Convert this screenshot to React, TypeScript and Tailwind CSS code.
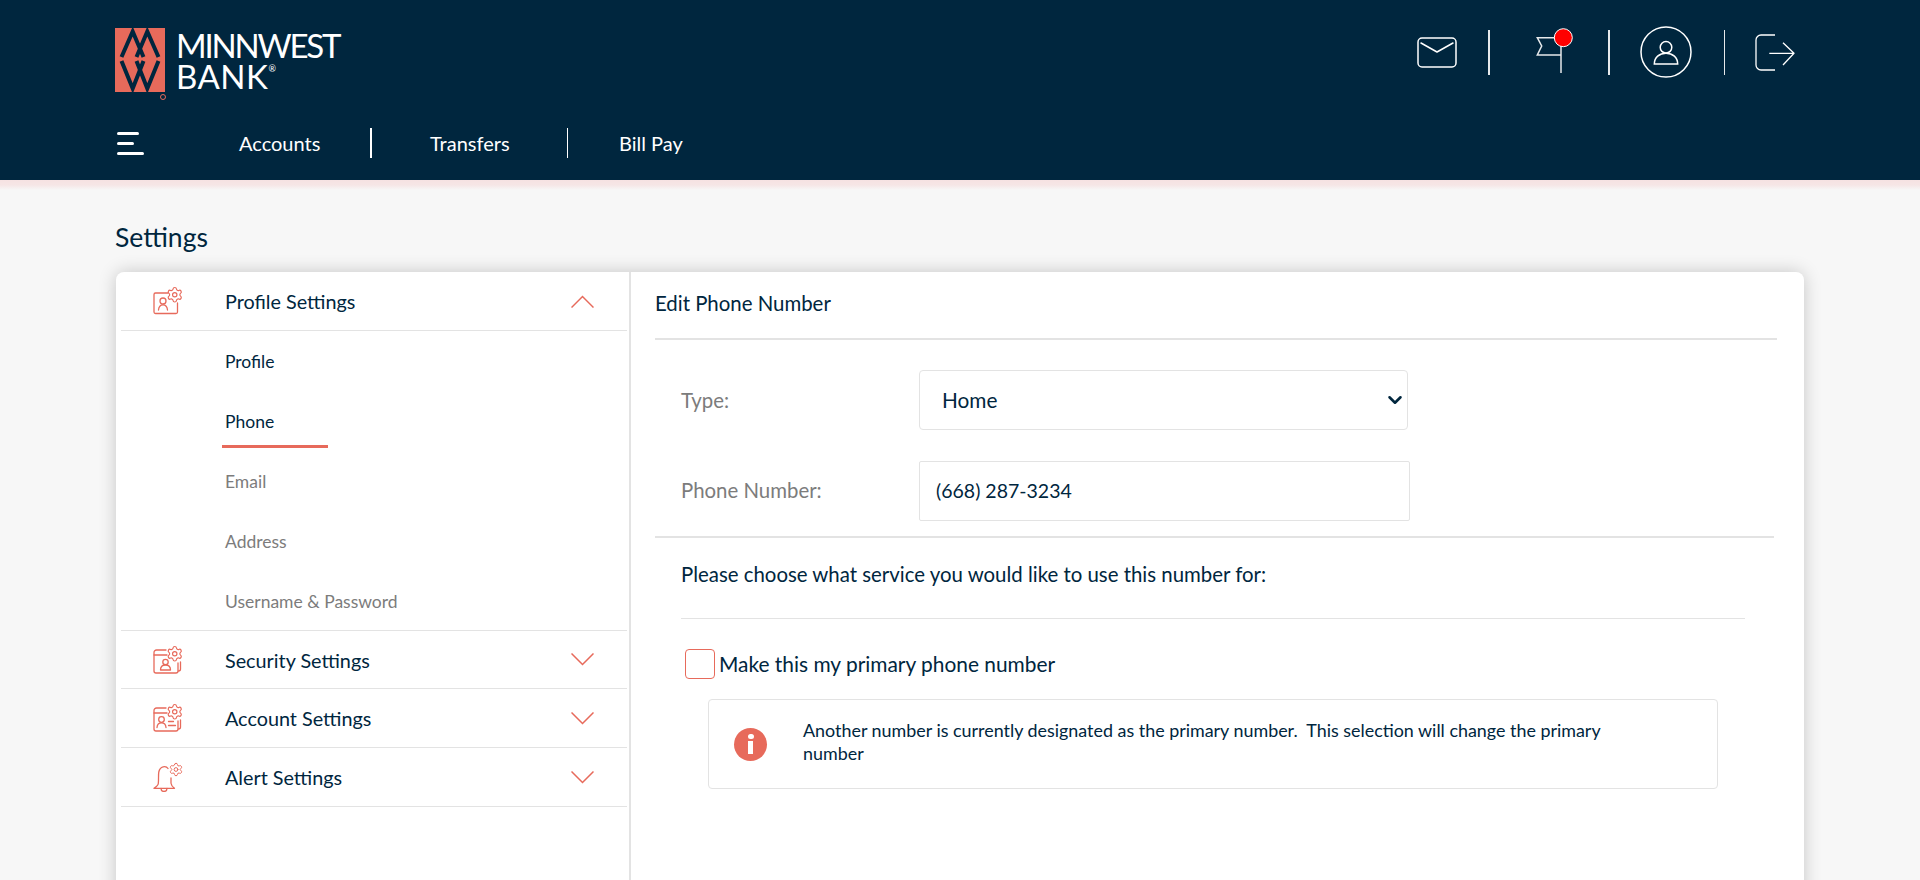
import { Settings as Gear, ChevronDown } from 'lucide-react'

const coral = '#e76a5b'

function CardIcon({ kind }: { kind: 'profile' | 'security' | 'account' | 'alert' }) {
  return (
    <svg width="30" height="30" viewBox="0 0 30 30" fill="none" stroke={coral} strokeWidth="1.300" strokeLinecap="round" strokeLinejoin="round">
      {kind === 'profile' && (
        <>
          <path d="M15 7H2.500A1.500 1.500 0 0 0 1 8.500V26a1.500 1.500 0 0 0 1.500 1.500H23a1.500 1.500 0 0 0 1.500-1.500V17" />
          <circle cx="10" cy="15" r="3" />
          <path d="M5.500 24c.3-3.500 2.200-5.200 4.500-5.200s4.200 1.700 4.500 5.200" />
        </>
      )}
      {kind === 'security' && (
        <>
          <path d="M13 5H3.500A2.500 2.500 0 0 0 1 7.500V26a2 2 0 0 0 2 2h20a2 2 0 0 0 2-2v-8" />
          <path d="M1 10h13" />
          <path d="M27.500 17v7a2 2 0 0 1-2 2" />
          <circle cx="12.500" cy="17" r="2.700" />
          <path d="M7.500 25c0-3.500 2-5 5-5s5 1.500 5 5z" />
        </>
      )}
      {kind === 'account' && (
        <>
          <path d="M13 5H3.500A2.500 2.500 0 0 0 1 7.500V26a2 2 0 0 0 2 2h20a2 2 0 0 0 2-2v-8" />
          <path d="M1 10h13" />
          <path d="M27.500 17v7a2 2 0 0 1-2 2" />
          <circle cx="8.500" cy="16.500" r="2.800" />
          <path d="M4 24.500c.2-3 2-4.600 4.500-4.600s4.300 1.600 4.500 4.600" />
          <path d="M15.500 18.500h5M15.500 22.500h7" />
        </>
      )}
      {kind === 'alert' && (
        <>
          <path d="M15 6.500C13 3.500 7 4 5.800 10c-.6 3 0 7.500-.5 11.500-.2 2-2.300 3.500-4.300 4.800h20.500c-1.800-1.300-3.300-3-3.500-5V16" />
          <path d="M8 26.500c0 2 1.500 3 3 3s3-1 3-3" />
        </>
      )}
      <Gear
        x={kind === 'alert' ? 15.500 : 13}
        y={0}
        width={kind === 'alert' ? 15 : 17.500}
        height={kind === 'alert' ? 15 : 17.500}
        color={coral}
        strokeWidth={1.600}
      />
    </svg>
  )
}

// thin coral chevron used on the accordion rows
function RowChevron({ up }: { up?: boolean }) {
  return (
    <svg width="23" height="13" viewBox="0 0 23 13" fill="none" stroke={coral} strokeWidth="1.500">
      <path d={up ? 'M0.500 12.500 11.500 1.500 22.500 12.500' : 'M0.500 0.500 11.500 11.500 22.500 0.500'} />
    </svg>
  )
}

function Logo() {
  return (
    <div className="relative w-[50px] h-[64px] bg-[#e76a5b]">
      <svg width="50" height="64" viewBox="0 0 50 64" fill="none" stroke="#00263e" strokeWidth="4">
        <path d="M6.500 29 17.700 3.500 28.500 29" />
        <path d="M43.500 29 32.300 3.500 21.500 29" />
        <path d="M6.500 33 17.700 60.500 28.500 33" />
        <path d="M43.500 33 32.300 60.500 21.500 33" />
      </svg>
      <span className="absolute -bottom-[8px] -right-[1px] w-[6px] h-[6px] rounded-full border border-[#e76a5b]" />
    </div>
  )
}

function Divider({ className }: { className: string }) {
  return <div className={`w-[2px] h-[45px] bg-[#e6e9eb] ${className}`} />
}

function Header() {
  return (
    <header className="h-[180px] bg-[#00263e] text-white flex flex-col">
      <div className="h-[128px] flex justify-between pl-[115px] pr-[125px]">
        <div className="flex items-start mt-[28px]">
          <Logo />
          <div className="ml-[11px] mt-[2px] font-['Lato',sans-serif] text-[33px] leading-[31px]">
            <div className="tracking-[-2.200px]">MINNWEST</div>
            <div className="flex tracking-[0.500px]">BANK<span className="text-[9px] leading-[16px] tracking-normal">®</span></div>
          </div>
        </div>
        <div className="flex items-center h-[52px] mt-[26px]">
          <svg className="mt-[2px]" width="40" height="32" viewBox="0 0 40 32" fill="none" stroke="white" strokeWidth="1.500" strokeLinecap="round" strokeLinejoin="round">
            <rect x="1" y="1" width="38" height="29" rx="4" />
            <path d="M4 6l16 9 16-9" />
          </svg>
          <Divider className="ml-[31px]" />
          <svg className="ml-[45px] mb-[5px]" width="40" height="47" viewBox="0 0 40 47" fill="none" stroke="#e6e9eb" strokeWidth="1.500">
            <path d="M21 11.700H2.300L6.700 20 2.300 29H26" />
            <path d="M26 20v27" />
            <circle cx="28.300" cy="11.700" r="9" fill="#ff0000" stroke="white" strokeWidth="1" />
          </svg>
          <Divider className="ml-[33px]" />
          <svg className="ml-[30px]" width="52" height="52" viewBox="0 0 52 52" fill="none" stroke="white" strokeWidth="1.500">
            <circle cx="26" cy="26" r="25" />
            <circle cx="26" cy="21.300" r="5.800" />
            <path d="M14.300 38c0-6.500 5-10.800 11.700-10.800S37.700 31.500 37.700 38z" />
          </svg>
          <div className="w-[1px] h-[45px] bg-[#e6e9eb] ml-[32px]" />
          <svg className="ml-[30px]" width="40" height="38" viewBox="0 0 40 38" fill="none" stroke="white" strokeWidth="1.300" strokeLinejoin="round">
            <path d="M20 2H6a5 5 0 0 0-5 5v25a5 5 0 0 0 5 5h14" />
            <path d="M14.300 20.300H39M28 9.700l11 10.600L28 32" />
          </svg>
        </div>
      </div>
      <nav className="h-[30px] flex items-center pl-[117px] font-['Lato',sans-serif] text-[20px]">
        <div className="w-[27px] flex flex-col gap-[7px]">
          <div className="h-[3px] w-[22px] bg-white rounded-sm" />
          <div className="h-[3px] w-[17px] bg-white rounded-sm" />
          <div className="h-[3px] w-[27px] bg-white rounded-sm" />
        </div>
        <div className="ml-[95px] w-[131px]">Accounts</div>
        <div className="w-[2px] h-[30px] bg-white" />
        <div className="ml-[58px] w-[137px]">Transfers</div>
        <div className="w-[1px] h-[30px] bg-white" />
        <div className="ml-[51px]">Bill Pay</div>
      </nav>
    </header>
  )
}

function AccordionRow({ kind, label, open, h }: { kind: 'profile' | 'security' | 'account' | 'alert'; label: string; open?: boolean; h: string }) {
  return (
    <div className={`${h} flex items-center pl-[32px] pr-[33px] border-b border-[#e3e3e3]`}>
      <CardIcon kind={kind} />
      <span className="ml-[42px] pt-[2px] flex-1 text-[19.800px] text-[#00263e]">{label}</span>
      <RowChevron up={open} />
    </div>
  )
}

function SideNav() {
  return (
    <div className="w-[515px] shrink-0 pl-[5px] pr-[2px] border-r-[2px] border-[#e3e3e3] font-['Lato',sans-serif]">
      <AccordionRow kind="profile" label="Profile Settings" open h="h-[59px]" />
      <div className="h-[60px] pt-[2px] flex items-center pl-[104px] text-[17.500px] text-[#00263e]">Profile</div>
      <div className="h-[60px] pl-[101px]">
        <div className="w-[106px] h-[57px] pt-[8px] pl-[3px] flex items-center border-b-[3px] border-[#e76a5b] text-[17.500px] text-[#00263e]">Phone</div>
      </div>
      <div className="h-[60px] pt-[2px] flex items-center pl-[104px] text-[17.500px] text-[#7c7c7c]">Email</div>
      <div className="h-[60px] pt-[2px] flex items-center pl-[104px] text-[17.500px] text-[#7c7c7c]">Address</div>
      <div className="h-[60px] pt-[3px] flex items-center pl-[104px] text-[17.500px] text-[#7c7c7c] border-b border-[#e3e3e3]">Username &amp; Password</div>
      <AccordionRow kind="security" label="Security Settings" h="h-[58px]" />
      <AccordionRow kind="account" label="Account Settings" h="h-[59px]" />
      <AccordionRow kind="alert" label="Alert Settings" h="h-[59px]" />
    </div>
  )
}

function PhoneForm() {
  return (
    <div className="flex-1 pl-[24px] font-['Lato',sans-serif] text-[#00263e]">
      <div className="w-[1122px] h-[68px] pb-[3px] flex items-center border-b-2 border-[#e3e3e3] text-[20.400px]">Edit Phone Number</div>
      <div className="flex items-center mt-[30px] pl-[26px]">
        <label className="w-[238px] text-[20.400px] text-[#7c7c7c]">Type:</label>
        <div className="relative w-[489px] h-[60px]">
          <select defaultValue="Home" className="appearance-none w-full h-full pl-[22px] pr-[8px] bg-white border border-[#e3e3e3] rounded-[4px] text-[20.800px] text-[#00263e]">
            <option>Home</option>
            <option>Work</option>
            <option>Mobile</option>
          </select>
          <ChevronDown className="absolute right-[2px] top-[19px] w-[22px] h-[22px] text-[#00263e] pointer-events-none" strokeWidth={2.800} />
        </div>
      </div>
      <div className="flex items-center mt-[31px] pl-[26px]">
        <label className="w-[238px] pb-[2px] text-[20.400px] text-[#7c7c7c]">Phone Number:</label>
        <input defaultValue="(668) 287-3234" className="w-[491px] h-[60px] pl-[16px] pb-[2px] bg-white border border-[#e3e3e3] rounded-[2px] text-[19.500px] text-[#00263e]" />
      </div>
      <div className="w-[1119px] h-[2px] mt-[15px] bg-[#e3e3e3]" />
      <p className="mt-[24px] ml-[26px] h-[24px] leading-[24px] text-[20.400px]">Please choose what service you would like to use this number for:</p>
      <div className="w-[1064px] h-[1px] mt-[32px] ml-[26px] bg-[#e3e3e3]" />
      <div className="flex items-center mt-[29px] ml-[30px]">
        <input type="checkbox" className="appearance-none w-[30px] h-[30px] bg-white border-[1.500px] border-[#e76a5b] rounded-[4px]" />
        <span className="ml-[4px] text-[20.900px]">Make this my primary phone number</span>
      </div>
      <div className="w-[1010px] h-[90px] mt-[20px] ml-[53px] pl-[25px] flex items-center border border-[#e3e3e3] rounded-[4px]">
        <div className="w-[33px] h-[33px] shrink-0 rounded-full bg-[#e76a5b] flex flex-col items-center justify-center gap-[2px]">
          <div className="w-[6px] h-[5px] rounded-full bg-white" />
          <div className="w-[5px] h-[13px] bg-white" />
        </div>
        <p className="ml-[36px] mb-[4px] w-[830px] text-[17.900px] leading-[23px]">Another number is currently designated as the primary number.&nbsp; This selection will change the primary number</p>
      </div>
    </div>
  )
}

export default function App() {
  return (
    <div className="h-screen overflow-hidden bg-[#f7f7f7]">
      <Header />
      <div className="h-[10px] bg-linear-to-b from-[#f6e2e2] via-[#f6e6e6] to-[#f7f7f7]" />
      <main className="px-[116px]">
        <h1 className="mt-[29px] -ml-[1px] h-[36px] leading-[36px] font-['Lato',sans-serif] text-[26.500px] text-[#00263e]">Settings</h1>
        <div className="mt-[17px] h-[900px] flex bg-white rounded-[8px] shadow-[0_0_18px_rgba(0,0,0,0.2)]">
          <SideNav />
          <PhoneForm />
        </div>
      </main>
    </div>
  )
}
